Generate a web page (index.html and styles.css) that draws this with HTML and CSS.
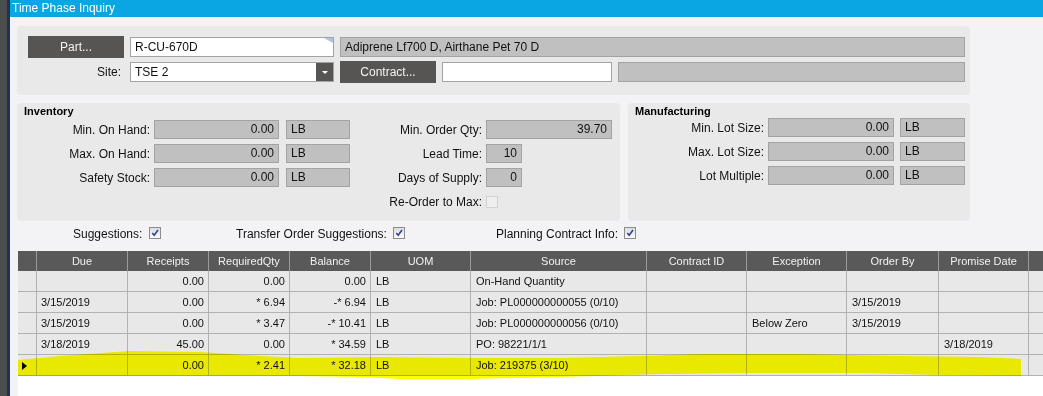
FILE: index.html
```html
<!DOCTYPE html>
<html lang="en">
<head>
    <meta charset="UTF-8">
    <meta name="viewport" content="width=device-width, initial-scale=1.0">
    <title>Time Phase Inquiry</title>
    <link rel="stylesheet" href="styles.css">
</head>
<body>
    <div class="edge"></div>
    <div class="window">
        <div class="titlebar">Time Phase Inquiry</div>

        <div class="part-panel">
            <button class="btn">Part...</button>
            <div class="field input part-input">R-CU-670D<span class="corner"></span></div>
            <div class="field readonly desc">Adiprene Lf700 D, Airthane Pet 70 D</div>

            <label class="label site-label">Site:</label>
            <div class="field input combo">TSE 2<span class="drop"></span></div>
            <button class="btn">Contract...</button>
            <div class="field input"></div>
            <div class="field readonly"></div>
        </div>

        <div class="panels">
            <div class="panel inventory">
                <div class="panel-title">Inventory</div>
                <div class="inv-grid">
                    <label class="label">Min. On Hand:</label>
                    <div class="field readonly num">0.00</div>
                    <div class="field readonly unit">LB</div>
                    <label class="label">Min. Order Qty:</label>
                    <div class="field readonly num">39.70</div>

                    <label class="label">Max. On Hand:</label>
                    <div class="field readonly num">0.00</div>
                    <div class="field readonly unit">LB</div>
                    <label class="label">Lead Time:</label>
                    <div class="field readonly num short">10</div>

                    <label class="label">Safety Stock:</label>
                    <div class="field readonly num">0.00</div>
                    <div class="field readonly unit">LB</div>
                    <label class="label">Days of Supply:</label>
                    <div class="field readonly num short">0</div>

                    <span></span><span></span><span></span>
                    <label class="label">Re-Order to Max:</label>
                    <div class="cell-check"><span class="check disabled"></span></div>
                </div>
            </div>

            <div class="panel manufacturing">
                <div class="panel-title">Manufacturing</div>
                <div class="mfg-grid">
                    <label class="label">Min. Lot Size:</label>
                    <div class="field readonly num">0.00</div>
                    <div class="field readonly unit">LB</div>

                    <label class="label">Max. Lot Size:</label>
                    <div class="field readonly num">0.00</div>
                    <div class="field readonly unit">LB</div>

                    <label class="label">Lot Multiple:</label>
                    <div class="field readonly num">0.00</div>
                    <div class="field readonly unit">LB</div>
                </div>
            </div>
        </div>

        <div class="options">
            <div class="option">Suggestions: <span class="check"><svg viewBox="0 0 11 11"><path d="M2.5 5.5 L4.6 8 L8.8 2.2"/></svg></span></div>
            <div class="option">Transfer Order Suggestions: <span class="check"><svg viewBox="0 0 11 11"><path d="M2.5 5.5 L4.6 8 L8.8 2.2"/></svg></span></div>
            <div class="option">Planning Contract Info: <span class="check"><svg viewBox="0 0 11 11"><path d="M2.5 5.5 L4.6 8 L8.8 2.2"/></svg></span></div>
        </div>

        <div class="grid">
            <div class="row head">
                <div></div>
                <div>Due</div>
                <div>Receipts</div>
                <div>RequiredQty</div>
                <div>Balance</div>
                <div>UOM</div>
                <div>Source</div>
                <div>Contract ID</div>
                <div>Exception</div>
                <div>Order By</div>
                <div>Promise Date</div>
                <div></div>
            </div>
            <div class="row">
                <div></div><div></div>
                <div class="r">0.00</div><div class="r">0.00</div><div class="r">0.00</div>
                <div class="l">LB</div><div class="l">On-Hand Quantity</div>
                <div></div><div></div><div></div><div></div><div></div>
            </div>
            <div class="row">
                <div></div><div>3/15/2019</div>
                <div class="r">0.00</div><div class="r">* 6.94</div><div class="r">-* 6.94</div>
                <div class="l">LB</div><div class="l">Job: PL000000000055 (0/10)</div>
                <div></div><div></div><div class="l">3/15/2019</div><div></div><div></div>
            </div>
            <div class="row">
                <div></div><div>3/15/2019</div>
                <div class="r">0.00</div><div class="r">* 3.47</div><div class="r">-* 10.41</div>
                <div class="l">LB</div><div class="l">Job: PL000000000056 (0/10)</div>
                <div></div><div class="l">Below Zero</div><div class="l">3/15/2019</div><div></div><div></div>
            </div>
            <div class="row">
                <div></div><div>3/18/2019</div>
                <div class="r">45.00</div><div class="r">0.00</div><div class="r">* 34.59</div>
                <div class="l">LB</div><div class="l">PO: 98221/1/1</div>
                <div></div><div></div><div></div><div class="l">3/18/2019</div><div></div>
            </div>
            <div class="row current">
                <div class="indicator"><span class="arrow"></span></div><div></div>
                <div class="r">0.00</div><div class="r">* 2.41</div><div class="r">* 32.18</div>
                <div class="l">LB</div><div class="l">Job: 219375 (3/10)</div>
                <div></div><div></div><div></div><div></div><div></div>
            </div>

            <!-- highlighter mark drawn over the current row -->
            <svg class="marker" width="1030" height="146" viewBox="0 0 1030 146">
                <path d="M0 109 L42 105 L112 100 L182 101 L242 105 L282 107 L362 106 L452 107 L542 107 L622 105 L682 103 L782 103 L882 105 L962 106 L1003 108 L1003 125 L922 124 L842 122 L742 122 L642 123 L542 126 L452 128 L382 128 L342 126 L282 125 L182 125 L0 125 Z"/>
            </svg>
        </div>
    </div>
</body>
</html>
```

FILE: styles.css
```css
* {
    margin: 0;
    padding: 0;
    box-sizing: border-box;
}

body {
    font-family: 'Liberation Sans', Arial, sans-serif;
    font-size: 12px;
    color: #111;
    background: #f3f3f5;
    display: flex;
    height: 396px;
    overflow: hidden;
}

.edge {
    width: 10px;
    flex: none;
    background: #4d4d4d;
    border-right: 3px solid #1d3350;
    border-right-width: 3px;
    box-shadow: inset -1px 0 0 #4d4d4d;
}

.window {
    flex: 1;
    min-width: 0;
    display: flex;
    flex-direction: column;
}

.titlebar {
    height: 17px;
    line-height: 16px;
    background: #0aa6e4;
    color: #fff;
    padding-left: 2px;
    font-size: 12px;
}

/* part / site block */
.part-panel {
    margin: 9px 73px 0 7px;
    height: 69px;
    padding: 10px 5px 12px 11px;
    background: #e9e9e9;
    border-radius: 4px;
    display: grid;
    grid-template-columns: 96px 204px 96px 170px 1fr;
    grid-template-rows: 22px 22px;
    column-gap: 6px;
    row-gap: 3px;
    align-items: center;
}

.desc {
    grid-column: 3 / 6;
}

.btn {
    height: 22px;
    background: #575553;
    color: #f2f2f2;
    border: none;
    font-family: inherit;
    font-size: 12px;
}

.label {
    text-align: right;
    white-space: nowrap;
}

.site-label {
    padding-right: 3px;
}

.field {
    height: 20px;
    line-height: 18px;
    padding: 0 4px;
    border: 1px solid #a3a3a3;
    white-space: nowrap;
    overflow: hidden;
}

.input {
    background: #fff;
    position: relative;
}

.readonly {
    background: #c0c0c0;
}

.part-input .corner {
    position: absolute;
    top: 0;
    right: 0;
    width: 0;
    height: 0;
    border-top: 5px solid #a9c6e6;
    border-left: 9px solid transparent;
}

.combo .drop {
    position: absolute;
    top: 0;
    right: 0;
    width: 17px;
    height: 18px;
    background: #575553;
}

.combo .drop::after {
    content: "";
    position: absolute;
    left: 6px;
    top: 8px;
    border-top: 3px solid #fff;
    border-left: 3px solid transparent;
    border-right: 3px solid transparent;
}

/* inventory / manufacturing */
.panels {
    margin: 8px 73px 0 7px;
    display: grid;
    grid-template-columns: 603px 342px;
    column-gap: 8px;
}

.panel {
    height: 118px;
    background: #e9e9e9;
    border-radius: 4px;
    padding: 1px 7px;
}

.panel-title {
    font-weight: bold;
    font-size: 11px;
    line-height: 14px;
    color: #000;
}

.panel .field {
    height: 19px;
    line-height: 17px;
}

.num {
    text-align: right;
}

.inv-grid {
    margin-top: 2px;
    display: grid;
    grid-template-columns: 126px 129px 71px 132px 130px;
    grid-auto-rows: 19px;
    row-gap: 5px;
    align-items: center;
}

.inv-grid .field,
.inv-grid .cell-check {
    margin-left: 4px;
}

.inv-grid .unit {
    margin-left: 7px;
}

.inv-grid .short {
    width: 36px;
}

.mfg-grid {
    display: grid;
    grid-template-columns: 129px 130px 71px;
    grid-auto-rows: 19px;
    row-gap: 5px;
    align-items: center;
}

.mfg-grid .field {
    margin-left: 4px;
}

.mfg-grid .unit {
    margin-left: 6px;
}

.cell-check {
    display: flex;
    align-items: center;
}

/* check boxes */
.check {
    display: inline-block;
    width: 12px;
    height: 12px;
    border: 1px solid #8c8c8c;
    background: linear-gradient(#dedede, #fafafa);
    vertical-align: -1px;
    margin-left: 3px;
}

.check svg {
    display: block;
    width: 10px;
    height: 10px;
    fill: none;
    stroke: #2b3f9e;
    stroke-width: 1.7;
}

.check.disabled {
    margin-left: 0;
    border-color: #d2d2d2;
    background: #efefef;
}

.options {
    height: 20px;
    margin-top: 3px;
    padding-left: 63px;
    display: grid;
    grid-template-columns: 163px 260px auto;
    align-items: center;
    white-space: nowrap;
}

/* time phase grid */
.grid {
    position: relative;
    margin: 7px 0 0 8px;
    flex: 1;
    background: #fff;
    overflow: hidden;
}

.row {
    display: grid;
    grid-template-columns: 19px 91px 81px 81px 81px 100px 176px 100px 100px 92px 90px 60px;
    width: 1071px;
    font-size: 11px;
}

.row > div {
    height: 21px;
    line-height: 20px;
    padding: 0 4px;
    background: #e8e8e8;
    border-right: 1px solid #b2b2b2;
    border-bottom: 1px solid #b2b2b2;
    white-space: nowrap;
    overflow: hidden;
}

.row.head > div {
    height: 20px;
    line-height: 20px;
    background: #595959;
    color: #f2f2f2;
    text-align: center;
    border-right-color: #9a9a9a;
    border-bottom: none;
}

.row > div.r {
    text-align: right;
}

.row > div.l {
    padding-left: 5px;
}

.indicator {
    position: relative;
}

.arrow {
    position: absolute;
    left: 4px;
    top: 7px;
    border-left: 5px solid #000;
    border-top: 4px solid transparent;
    border-bottom: 4px solid transparent;
}

.marker {
    position: absolute;
    left: 0;
    top: 0;
    pointer-events: none;
    mix-blend-mode: multiply;
}

.marker path {
    fill: #ffff00;
}
```
